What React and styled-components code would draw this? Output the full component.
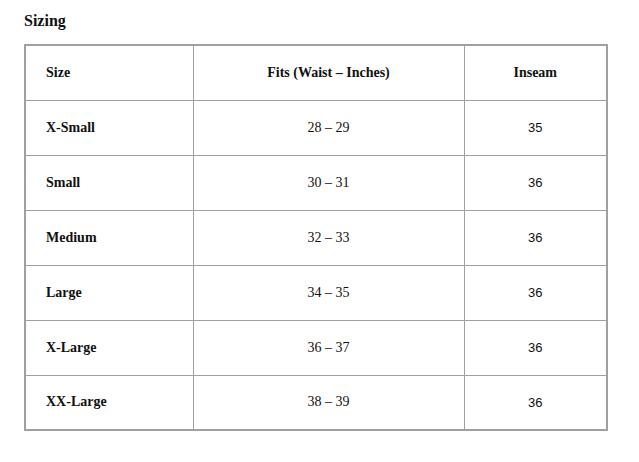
import React from 'react';
import styled, { createGlobalStyle } from 'styled-components';

const GlobalStyle = createGlobalStyle`
	body {
		margin: 8px;
		background: #fff;
		font-family: "Liberation Serif", "Times New Roman", serif;
		color: #111;
	}
`;

const Container = styled.div`
	padding: 0 16px;
`;

const Heading = styled.h3`
	margin: 4px 0 15px;
	font-size: 16px;
	font-weight: bold;
	line-height: 17px;
`;

const Table = styled.table`
	width: 582px;
	border-collapse: collapse;
	table-layout: fixed;
	border: 2px solid #a0a0a0;
`;

const Cell = styled.td`
	height: 55px;
	padding: 0 20px;
	border: 1px solid #a0a0a0;
	font-weight: ${props => (props.$bold ? 'bold' : 'normal')};
	text-align: ${props => props.$align || 'center'};
	font-family: ${props => (props.$sans ? '"Liberation Sans", Arial, sans-serif' : 'inherit')};
	font-size: ${props => (props.$sans ? '13px' : '14px')};
	vertical-align: middle;
	box-sizing: border-box;
`;

const rows = [
	['X-Small', '28 – 29', '35'],
	['Small', '30 – 31', '36'],
	['Medium', '32 – 33', '36'],
	['Large', '34 – 35', '36'],
	['X-Large', '36 – 37', '36'],
	['XX-Large', '38 – 39', '36']
];

const App = () => (
	<Container>
		<GlobalStyle />
		<Heading>Sizing</Heading>
		<Table>
			<colgroup>
				<col style={{ width: 168 }} />
				<col style={{ width: 271 }} />
				<col style={{ width: 143 }} />
			</colgroup>
			<tbody>
				<tr>
					<Cell $bold $align="left">Size</Cell>
					<Cell $bold>Fits (Waist – Inches)</Cell>
					<Cell $bold>Inseam</Cell>
				</tr>
				{rows.map(r => (
					<tr key={r[0]}>
						<Cell $bold $align="left">{r[0]}</Cell>
						<Cell>{r[1]}</Cell>
						<Cell $sans>{r[2]}</Cell>
					</tr>
				))}
			</tbody>
		</Table>
	</Container>
);

export default App;
